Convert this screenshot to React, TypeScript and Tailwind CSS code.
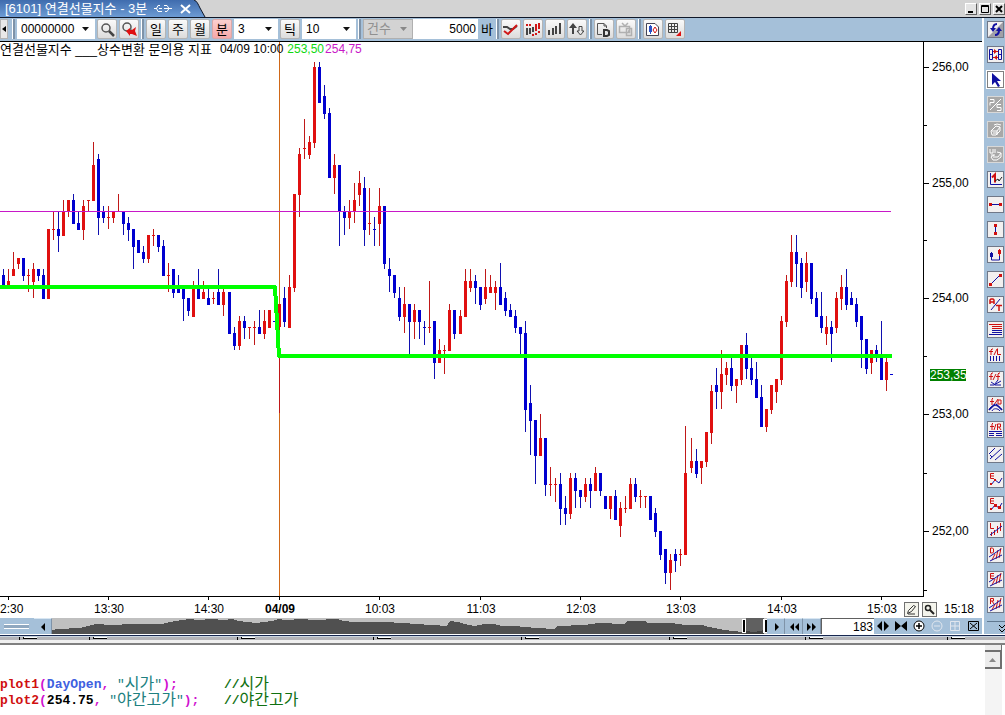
import React from 'react';

type Candle = [x: number, high: number, top: number, bottom: number, low: number, up: 0 | 1];

// 3-minute bars, in chart units
const candles: Candle[] = [
  [3, 269, 275, 285, 285, 0], [8, 269, 281, 285, 285, 1], [13, 252, 269, 276, 276, 1], [18, 258, 258, 264, 269, 1],
  [23, 258, 258, 276, 281, 0], [28, 269, 275, 275, 292, 1], [33, 263, 269, 282, 298, 1], [38, 269, 269, 276, 281, 0],
  [43, 269, 275, 299, 299, 0], [48, 229, 229, 299, 299, 1], [53, 212, 229, 229, 240, 1], [58, 212, 229, 236, 252, 0],
  [63, 200, 212, 236, 236, 1], [68, 200, 200, 212, 217, 1], [73, 194, 200, 224, 224, 0], [78, 212, 223, 230, 230, 0],
  [83, 200, 206, 230, 240, 1], [88, 200, 200, 200, 212, 1], [93, 142, 165, 201, 201, 1], [98, 154, 159, 218, 235, 0],
  [103, 206, 212, 218, 223, 0], [108, 206, 217, 217, 229, 1], [113, 212, 212, 218, 223, 1], [118, 194, 211, 211, 212, 1],
  [123, 212, 212, 224, 235, 0], [128, 217, 223, 230, 241, 0], [133, 229, 229, 247, 269, 0], [138, 240, 240, 253, 253, 0],
  [143, 246, 252, 259, 263, 0], [148, 235, 235, 259, 263, 1], [153, 229, 235, 235, 246, 1], [158, 235, 235, 247, 252, 0],
  [163, 240, 246, 276, 276, 0], [168, 263, 275, 275, 292, 1], [173, 269, 269, 293, 298, 0], [178, 275, 285, 293, 293, 0],
  [183, 289, 289, 299, 321, 0], [188, 298, 298, 311, 316, 0], [193, 281, 287, 317, 317, 1], [198, 269, 287, 299, 299, 0],
  [203, 281, 292, 299, 299, 1], [208, 288, 298, 305, 305, 0], [213, 292, 298, 298, 304, 1], [218, 269, 292, 305, 305, 0],
  [223, 288, 292, 305, 316, 1], [229, 292, 292, 334, 334, 0], [234, 327, 333, 346, 350, 0], [239, 316, 321, 346, 350, 1],
  [244, 316, 321, 328, 339, 0], [249, 327, 327, 327, 339, 1], [254, 321, 327, 327, 345, 1], [259, 310, 327, 334, 334, 0],
  [264, 310, 321, 334, 339, 1], [269, 310, 310, 328, 328, 1], [274, 321, 321, 321, 321, 0], [279, 304, 304, 327, 413, 1],
  [284, 287, 298, 322, 327, 0], [289, 275, 287, 328, 328, 1], [294, 194, 194, 288, 292, 1], [299, 148, 154, 195, 217, 1],
  [304, 119, 148, 148, 159, 1], [309, 136, 142, 155, 159, 1], [314, 62, 67, 143, 148, 1], [319, 62, 67, 103, 103, 0],
  [324, 85, 96, 114, 119, 0], [329, 108, 113, 178, 178, 0], [334, 154, 165, 178, 194, 1], [339, 165, 165, 212, 246, 0],
  [344, 206, 211, 218, 235, 0], [349, 200, 211, 218, 229, 1], [354, 183, 200, 212, 223, 1], [359, 171, 183, 195, 206, 1],
  [364, 177, 188, 230, 246, 0], [369, 188, 223, 223, 235, 1], [374, 217, 229, 229, 246, 0], [379, 188, 206, 224, 246, 1],
  [384, 206, 206, 264, 269, 0], [389, 258, 269, 276, 292, 0], [394, 275, 275, 293, 298, 0], [399, 287, 298, 317, 321, 0],
  [404, 287, 304, 317, 333, 1], [409, 304, 304, 322, 354, 0], [414, 304, 310, 322, 339, 1], [419, 310, 310, 322, 339, 0],
  [424, 321, 327, 327, 345, 0], [429, 281, 327, 327, 333, 1], [434, 321, 321, 363, 379, 0], [439, 339, 350, 363, 363, 1],
  [444, 345, 350, 350, 374, 1], [449, 304, 310, 351, 351, 1], [454, 310, 310, 334, 339, 0], [460, 310, 316, 334, 334, 1],
  [465, 269, 281, 317, 317, 1], [470, 269, 281, 288, 292, 1], [475, 275, 281, 288, 304, 0], [480, 287, 287, 305, 310, 0],
  [485, 269, 287, 299, 304, 1], [490, 275, 287, 293, 293, 1], [495, 281, 287, 293, 310, 1], [500, 263, 287, 305, 305, 0],
  [505, 292, 298, 311, 316, 0], [510, 304, 310, 317, 317, 0], [515, 310, 316, 328, 333, 0], [520, 327, 327, 334, 354, 0],
  [525, 321, 333, 410, 432, 0], [530, 385, 403, 421, 455, 0], [535, 420, 420, 456, 484, 0], [540, 414, 438, 456, 456, 1],
  [545, 438, 438, 485, 496, 0], [550, 467, 484, 484, 496, 1], [555, 478, 484, 484, 502, 1], [560, 473, 484, 509, 525, 0],
  [565, 496, 508, 514, 525, 0], [570, 473, 478, 514, 519, 1], [575, 473, 478, 491, 508, 0], [580, 490, 490, 497, 508, 0],
  [585, 478, 484, 497, 502, 1], [590, 478, 484, 491, 508, 0], [595, 467, 473, 491, 491, 1], [600, 473, 473, 491, 496, 0],
  [605, 496, 496, 509, 509, 0], [610, 496, 496, 509, 519, 1], [615, 490, 496, 520, 520, 0], [620, 502, 508, 526, 537, 1],
  [625, 496, 508, 508, 513, 1], [630, 478, 484, 509, 509, 1], [635, 478, 484, 497, 502, 0], [640, 490, 496, 496, 508, 1],
  [645, 496, 496, 496, 508, 1], [650, 496, 496, 520, 520, 0], [655, 508, 513, 532, 537, 0], [660, 531, 531, 555, 560, 0],
  [665, 549, 549, 573, 584, 0], [670, 554, 560, 573, 590, 1], [675, 549, 554, 561, 572, 0], [680, 549, 554, 554, 566, 1],
  [685, 426, 473, 555, 555, 1], [691, 438, 461, 468, 473, 1], [696, 449, 461, 474, 478, 0], [701, 461, 461, 468, 484, 1],
  [706, 432, 432, 462, 467, 1], [711, 385, 391, 433, 444, 1], [716, 368, 385, 392, 409, 0], [721, 350, 374, 392, 409, 1],
  [726, 362, 368, 375, 385, 1], [731, 357, 368, 386, 391, 0], [736, 379, 379, 386, 403, 1], [741, 345, 345, 380, 385, 1],
  [746, 333, 345, 369, 379, 0], [751, 357, 368, 380, 385, 0], [756, 362, 379, 398, 398, 0], [761, 385, 397, 427, 427, 0],
  [766, 409, 409, 427, 432, 1], [771, 385, 385, 410, 414, 1], [776, 379, 379, 392, 403, 1], [781, 316, 321, 380, 385, 1],
  [786, 275, 281, 322, 327, 1], [791, 235, 252, 282, 287, 1], [796, 235, 252, 264, 287, 0], [801, 258, 263, 288, 298, 0],
  [806, 252, 263, 282, 292, 1], [811, 263, 263, 299, 304, 0], [816, 292, 298, 317, 317, 0], [821, 292, 316, 328, 333, 0],
  [826, 316, 327, 334, 345, 1], [831, 321, 327, 334, 362, 0], [836, 292, 298, 328, 333, 1], [841, 275, 287, 299, 310, 1],
  [846, 269, 287, 305, 310, 0], [851, 292, 298, 305, 305, 0], [856, 298, 304, 322, 327, 0], [861, 316, 316, 340, 368, 0],
  [866, 339, 339, 369, 374, 0], [871, 350, 350, 363, 374, 1], [876, 345, 350, 356, 362, 0], [881, 321, 357, 380, 380, 0],
  [886, 357, 362, 380, 391, 1], [891, 374, 374, 374, 374, 0],
];

const priceTicks = [
  { y: 67, label: '256,00' },
  { y: 183, label: '255,00' },
  { y: 298, label: '254,00' },
  { y: 414, label: '253,00' },
  { y: 531, label: '252,00' },
];
const minorTicks = [125, 240, 356, 473, 590];

const timeTicks = [
  { x: 108, label: '13:30' },
  { x: 208, label: '14:30' },
  { x: 279, label: '04/09', bold: true },
  { x: 379, label: '10:03' },
  { x: 480, label: '11:03' },
  { x: 580, label: '12:03' },
  { x: 680, label: '13:03' },
  { x: 781, label: '14:03' },
  { x: 881, label: '15:03' },
];

const R = '#d01010';
const B = '#1010a0';

function Line({ d, c = B, w = 1 }: { d: string; c?: string; w?: number }) {
  return <path d={d} stroke={c} strokeWidth={w} fill="none" />;
}

const tools: { name: string; kind?: 'off' | 'on'; icon: React.ReactNode }[] = [
  {
    name: '새로고침',
    icon: (
      <>
        <path d="M15 0v15H0z" fill="#a0a0a8" />
        <Line d="M9 2C6 2 5 4 5 7" w={2} />
        <path d="M2 6h6L5 10z" fill={B} />
        <Line d="M7 13c3 0 4-2 4-5" w={2} />
        <path d="M8 9h6l-3-4z" fill={B} />
      </>
    ),
  },
  {
    name: '연결',
    icon: (
      <>
        <Line d="M1.500 2.500h3v10h-3zM10.500 2.500h3v10h-3zM1 7.500h4M10 7.500h4" />
        <Line d="M5 4.500h5M5 10.500h5" c={R} />
        <path d="M6 2v5l3-2.500zM9 8v5l-3-2.500z" fill={R} />
      </>
    ),
  },
  { name: '선택', kind: 'on', icon: <path d="M4 1v12l3-3 3 5 2-1-3-5h4z" fill={B} /> },
  { name: '비율', kind: 'off', icon: <Line d="M2 13L13 2M2 2.500h4v3H2v3M13 7.500H9v3h4v3H9" c="#fff" /> },
  { name: '지우개', kind: 'off', icon: <Line d="M3 9l5-5 4 1v4l-4 4H4zM4 9h5l3-4M6 3l3-1 4 1M9 9v4M5 11h5" c="#fff" /> },
  { name: '전체 지우기', kind: 'off', icon: <Line d="M2 2v4h3V2M7 2v4M9 5l4 1v4l-4 3H5l-2-3 3-2M5 10h5l3-4M3 8h4" c="#fff" /> },
  {
    name: '지그재그',
    icon: (
      <>
        <Line d="M2.500 1v11.500H14" />
        <Line d="M4 5.500l3-3v8" c={R} w={2} />
        <Line d="M7 9l3-2 1 2 3-4" c="#202020" />
      </>
    ),
  },
  {
    name: '수평선',
    icon: (
      <>
        <Line d="M3 7.500h9" />
        <path d="M1 6h3v3H1zM11 6h3v3h-3z" fill={R} />
      </>
    ),
  },
  {
    name: '수직선',
    icon: (
      <>
        <Line d="M7.500 3v9" />
        <path d="M6 2h3v3H6zM6 10h3v3H6z" fill={R} />
      </>
    ),
  },
  {
    name: '크로스',
    icon: (
      <>
        <Line d="M3.500 5v8h8V9" />
        <path d="M2 6h3v4H2z" fill={B} />
        <Line d="M11.500 2v7" c={R} />
        <path d="M10 3h3v4h-3z" fill={R} />
      </>
    ),
  },
  {
    name: '추세선',
    icon: (
      <>
        <Line d="M3 12L12 3" />
        <path d="M1 11h3v3H1zM11 2h3v3h-3z" fill={R} />
      </>
    ),
  },
  {
    name: '문자',
    icon: (
      <>
        <Line d="M3 13L12 2" />
        <Line d="M2 7V3l1-1h2l1 1v4M2 5h4M8 8.500h6M11 8v6" c={R} w={1.5} />
      </>
    ),
  },
  {
    name: '피보나치',
    icon: (
      <>
        <Line d="M1 2.500h13M4 4.500h10M4 6.500h10" c={R} />
        <Line d="M4 8.500h10M4 10.500h10M1 12.500h13" />
      </>
    ),
  },
  {
    name: '피보나치 시간대',
    icon: (
      <>
        <Line d="M5 2H4L3 3v5M1 4.500h4M9.500 1.500v6H13M6 8l3-6" c={R} />
        <Line d="M2.500 9v5M5.500 9v5M8.500 9v5M11.500 9v5" />
      </>
    ),
  },
  {
    name: '피보나치 팬',
    icon: (
      <>
        <Line d="M5 1H4L3 2v6M1 4.500h4M12 1h-1l-1 1v6M8 4.500h4M5 8l3-6" c={R} />
        <Line d="M2 13h4l4-5M6 13l7-4M3 10l3 2M7 13h6" />
      </>
    ),
  },
  {
    name: '피보나치 아크',
    icon: (
      <>
        <Line d="M5 1L4 2v6M2 4.500h4M13 3h-3v4h3V3M6 8l4-6" c={R} />
        <Line d="M1 13c2-6 10-6 13 0M4 14c1-3 6-3 8 0" />
        <Line d="M7 7l-6 6M8 7l6 6" w={1.5} />
      </>
    ),
  },
  {
    name: '피보나치 되돌림',
    icon: (
      <>
        <Line d="M5 1L4 2v6M2 4.500h4M9.500 8V2h3v3h-3M11 5l2 3M6 8l2-6" c={R} />
        <Line d="M1 9.500h13M1 11.500h5M8 11.500h6M1 13.500h5M8 13.500h6" />
      </>
    ),
  },
  { name: '평행선', icon: <Line d="M1 7l6-6M2 12L13 2M7 13l7-6M2 8l2 2" /> },
  {
    name: '엘리어트',
    icon: (
      <>
        <Line d="M6 1.500H2.500v5H6M3 4h3" c={R} />
        <Line d="M3 13l4-5 4 3 3-5" />
        <path d="M2 11h2v2H2zM6 7h2v2H6z" fill={R} />
      </>
    ),
  },
  {
    name: '엘리어트 2',
    icon: (
      <>
        <Line d="M6 1.500H2.500v5H6M3 4h3" c={R} />
        <Line d="M3 13l4-5 4 3 3-5" />
        <path d="M2 11h2v2H2zM6 7h3v3H6zM10 9h3v3h-3z" fill={R} />
      </>
    ),
  },
  {
    name: '선형회귀',
    icon: (
      <>
        <Line d="M2.500 1v5.500H6" c={R} />
        <Line d="M3.500 14v-4M6.500 13V8M9.500 11V4M12.500 9V1" c={R} />
        <Line d="M2 13l12-9" />
      </>
    ),
  },
  {
    name: '회귀 채널',
    icon: (
      <>
        <Line d="M2.500 1v5h2l1-1V2l-1-1zM4 13l3-6M8 12l2-9M11 11l2-10" c={R} />
        <Line d="M1 10l12-8M2 14l12-6" />
      </>
    ),
  },
  {
    name: '표준편차 채널',
    icon: (
      <>
        <Line d="M6 1.500H2.500v5H6M3 4h3M4 13l3-6M8 12l2-9M11 11l2-10" c={R} />
        <Line d="M1 10l12-8M2 14l12-6" />
      </>
    ),
  },
  {
    name: '래프 채널',
    icon: (
      <>
        <Line d="M2.500 7V1.500h3V4h-3M4 4l2 3M4 13l3-6M8 12l2-9M11 11l2-10" c={R} />
        <Line d="M1 11l12-8M2 14l12-6" />
      </>
    ),
  },
];

function Sep() {
  return <span className="h-5 w-[3px] shrink-0 border-l border-white bg-[#7f93a8]" />;
}

function ToolButton({ label, active, children }: { label: string; active?: boolean; children: React.ReactNode }) {
  return (
    <button
      aria-label={label}
      className={
        'flex h-5 w-5 shrink-0 items-center justify-center rounded-[2px] border text-[13px] leading-none ' +
        (active
          ? 'border-[#d8a8a8] bg-linear-to-b from-[#fbd0d0] to-[#f4a8a8]'
          : 'border-[#b4b4b4] bg-linear-to-b from-[#fafafa] to-[#dcdcdc]')
      }
    >
      {children}
    </button>
  );
}

function Combo({ label, value, width, disabled }: { label: string; value: string; width: string; disabled?: boolean }) {
  return (
    <div className={'relative h-5 shrink-0 ' + width}>
      <select
        aria-label={label}
        disabled={disabled}
        className={
          'block h-5 w-full appearance-none border px-[3px] leading-4 ' +
          (disabled
            ? 'border-[#b0b0b0] bg-[#d3d3d3] text-[13px] text-[#909090] opacity-100'
            : 'border-white bg-white text-xs leading-4 text-black')
        }
      >
        <option>{value}</option>
      </select>
      <svg viewBox="0 0 7 4" className="pointer-events-none absolute right-[6px] top-2 h-1 w-[7px]">
        <path d="M0 0h7L3.500 4z" fill={disabled ? '#888' : '#111'} />
      </svg>
    </div>
  );
}

function TitleBar() {
  return (
    <header className="flex h-[18px] items-stretch justify-between border-b border-[#101828] bg-[#d3d3d3]">
      <div className="flex">
        <div className="flex items-center bg-linear-to-b from-[#3f6cae] to-[#6d9bd3] pl-[5px] text-white">
          <h1 className="whitespace-pre text-[13px] leading-none">[6101] 연결선물지수 - 3분</h1>
          <svg viewBox="0 0 18 9" className="ml-[7px] h-[9px] w-[18px]" fill="none" stroke="#fff" strokeWidth="1">
            <path d="M0 4.500h3M6 1.500H4L2.500 4.500 4 7.500h4M5 4.500h3M10 1.500h3l2 3-2 3h-2M10 4.500h8" />
          </svg>
          <button aria-label="탭 닫기" className="ml-2 flex w-3 items-center">
            <svg viewBox="0 0 11 10" className="h-[10px] w-[11px]" stroke="#fff" strokeWidth="2">
              <path d="M1 1l9 8M10 1L1 9" />
            </svg>
          </button>
        </div>
        <svg viewBox="0 0 14 17" className="h-[17px] w-[14px]">
          <defs>
            <linearGradient id="tab" x1="0" y1="0" x2="0" y2="1">
              <stop offset="0" stopColor="#3f6cae" />
              <stop offset="1" stopColor="#6d9bd3" />
            </linearGradient>
          </defs>
          <path d="M0 0h2c3 1 4 4 6 8l5 9H0z" fill="url(#tab)" />
          <path d="M2 0c3 1 4 4 6 8l5 9" fill="none" stroke="#101828" />
        </svg>
      </div>
      <div className="flex items-center gap-[2px]">
        {[
          ['최소화', 'M2 8h5', 2],
          ['최대화', 'M1.5 1.5h7v7h-7zM1.5 2.5h7', 1],
          ['닫기', 'M2 2l6 6M8 2L2 8', 2],
        ].map(([label, d, w]) => (
          <button
            key={label}
            aria-label={label as string}
            className="flex h-3 w-3 items-center justify-center border border-t-white border-l-white border-r-[#606060] border-b-[#606060] bg-[#e4e4e4]"
          >
            <svg viewBox="0 0 10 10" className="h-[10px] w-[10px]" fill="none" stroke="#000" strokeWidth={w as number}>
              <path d={d as string} />
            </svg>
          </button>
        ))}
      </div>
    </header>
  );
}

function Toolbar() {
  return (
    <div className="flex h-6 items-center overflow-hidden border-b border-black bg-[#a5c0d9] pb-px">
      <button aria-label="이전" className="flex h-5 w-2 items-center justify-center border border-[#b4b4b4] bg-[#e8e8e8]">
        <svg viewBox="0 0 4 6" className="h-[6px] w-1">
          <path d="M4 0v6L0 3z" />
        </svg>
      </button>
      <div className="ml-1 flex items-center gap-[2px]">
        <Sep />
        <Combo label="종목코드" value="00000000" width="w-[78px]" />
        <ToolButton label="종목 검색">
          <svg viewBox="0 0 15 15" className="h-[15px] w-[15px]" fill="none">
            <circle cx="6" cy="6" r="4" stroke="#555" strokeWidth="1.500" />
            <path d="M9 9l5 5" stroke="#444" strokeWidth="2.500" />
          </svg>
        </ToolButton>
        <ToolButton label="검색 취소">
          <svg viewBox="0 0 15 15" className="h-[15px] w-[15px]" fill="none">
            <circle cx="5" cy="5" r="4" stroke="#555" strokeWidth="1.500" />
            <path d="M9 8l4 4" stroke="#444" strokeWidth="2" />
            <path d="M4 9l4-3v2h2l4-3-1 4 2 5-5-2H8v2z" fill="#e01010" />
          </svg>
        </ToolButton>
        <Sep />
        <ToolButton label="일">일</ToolButton>
        <ToolButton label="주">주</ToolButton>
        <ToolButton label="월">월</ToolButton>
        <ToolButton label="분" active>분</ToolButton>
        <Combo label="분 단위" value="3" width="w-[44px]" />
        <ToolButton label="틱">틱</ToolButton>
        <Combo label="틱 단위" value="10" width="w-[54px]" />
        <Sep />
        <Combo label="조회 기준" value="건수" width="w-[50px]" disabled />
      </div>
      <label className="flex shrink-0 items-center gap-[3px] text-[13px] leading-none">
        <input defaultValue="5000" className="h-5 w-[65px] border border-white bg-white px-px text-right text-xs" />
        바
      </label>
      <div className="ml-[3px] flex items-center gap-[2px]">
        <Sep />
        <ToolButton label="선형 차트">
          <svg viewBox="0 0 15 15" className="h-[15px] w-[15px]" fill="none">
            <path d="M0 5h4l3 2h3l4-3" stroke="#444" strokeWidth="2" />
            <path d="M1 9l4 3 9-9" stroke="#d01818" strokeWidth="2" />
          </svg>
        </ToolButton>
        <ToolButton label="캔들 설정">
          <svg viewBox="0 0 15 15" className="h-[15px] w-[15px]" fill="none" strokeWidth="2">
            <path d="M2 6v7M5 6v6M8 5v5" stroke="#444" />
            <path d="M2 2v2M5 2v2M8 12v2M11 2v7M11 11v2M14 1v6M14 9v2" stroke="#d01818" />
          </svg>
        </ToolButton>
        <ToolButton label="거래량">
          <svg viewBox="0 0 15 15" className="h-[15px] w-[15px]" fill="none" stroke="#444" strokeWidth="2">
            <path d="M2 8v5M6 6v7M9 4v8M13 1v11" />
          </svg>
        </ToolButton>
        <ToolButton label="정렬">
          <svg viewBox="0 0 15 15" className="h-[15px] w-[15px]" fill="none" stroke="#444">
            <path d="M0 6l4-5 4 5H5v6H3V6z" fill="#444" stroke="none" />
            <path d="M10 4.500h3V9h2l-3.500 4L8 9h2z" />
          </svg>
        </ToolButton>
        <Sep />
        <ToolButton label="문서">
          <svg viewBox="0 0 15 15" className="h-[15px] w-[15px]" fill="none" stroke="#555">
            <path d="M6 12.500H1.500v-11H8L10.500 4v2M8 1.500V4h2.500" />
            <path d="M8 8h3l2 1v4l-2 1H8z" stroke="#333" strokeWidth="2" />
          </svg>
        </ToolButton>
        <ToolButton label="방송">
          <svg viewBox="0 0 15 15" className="h-[15px] w-[15px]" fill="none" stroke="#b0b0b0">
            <path d="M1.500 4.500h10v6h-10zM4 1l3 3 3-3M8.500 6.500h5v7h-5zM10 9h2" strokeWidth="1.500" />
          </svg>
        </ToolButton>
        <Sep />
        <ToolButton label="차트 저장">
          <svg viewBox="0 0 15 15" className="h-[15px] w-[15px]" fill="none">
            <path d="M1.500 1.500H10L13.500 5v8.500h-12z" stroke="#445" fill="#fff" />
            <path d="M4 4h3v6H4zM5 3h1v9H5z" fill="#2850c8" />
            <path d="M10 5l2 3-2 3-2-3z" stroke="#d01818" />
          </svg>
        </ToolButton>
        <ToolButton label="격자">
          <svg viewBox="0 0 15 15" className="h-[15px] w-[15px]" fill="none">
            <path d="M1.500 1.500h9v9h-9zM4.500 1.500v9M7.500 1.500v9M1.500 4.500h9M1.500 7.500h9" stroke="#444" />
            <path d="M14 9v5H9z" fill="#e01010" />
          </svg>
        </ToolButton>
      </div>
    </div>
  );
}

function PriceChart() {
  return (
    <div className="relative bg-white">
      <svg viewBox="0 42 982 576" className="block h-auto w-full" shapeRendering="crispEdges">
        <rect x="279" y="42" width="1" height="554" fill="#d06818" />
        {candles.map(([x, high, top, bottom, low, up]) => (
          <g key={x} fill={up ? '#e01010' : '#0000d0'}>
            <rect x={x} y={high} width="1" height={Math.max(1, low - high)} fill={up ? '#c01818' : '#1010b0'} />
            <rect x={x - 1} y={top} width="3" height={Math.max(1, bottom - top)} />
          </g>
        ))}
        <rect x="0" y="211" width="891" height="1" fill="#c818c8" />
        <path d="M0 287h275l4 69h613" fill="none" stroke="#00ff00" strokeWidth="4" strokeLinejoin="round" />

        <path d="M0 596.500h923.500V42" fill="none" stroke="#000" />
        {priceTicks.map((t) => (
          <g key={t.y}>
            <rect x="924" y={t.y} width="5" height="1" />
            <text x="932" y={t.y + 4} fontSize="12">{t.label}</text>
          </g>
        ))}
        {minorTicks.map((y) => (
          <rect key={y} x="924" y={y} width="3" height="1" />
        ))}
        <rect x="8" y="597" width="1" height="3" />
        <text x="0" y="613" fontSize="12">2:30</text>
        {timeTicks.map((t) => (
          <g key={t.x}>
            <rect x={t.x} y="597" width="1" height="3" />
            <text x={t.x + 1} y="613" fontSize="12" textAnchor="middle" fontWeight={t.bold ? 700 : 400}>
              {t.label}
            </text>
          </g>
        ))}
        <rect x="930" y="369" width="36" height="12" fill="#008000" />
        <text x="930" y="379" fontSize="12" fill="#fff">253,35</text>
      </svg>
      <p className="absolute left-0 top-0 flex items-center whitespace-pre text-xs leading-[15px]">
        <span className="text-[13px] leading-[15px]">연결선물지수 ___상수변환 문의용 지표</span>
        <span className="ml-2">04/09 10:00</span>
        <span className="ml-1 text-[#10d810]">253,50</span>
        <span className="ml-px text-[#c818c8]">254,75</span>
      </p>
      <div className="absolute right-2 bottom-0 flex h-[18px] items-center gap-[3px] text-xs leading-none">
        <button aria-label="그리기" className="flex h-[15px] w-[15px] items-center justify-center border border-[#707070] bg-[#f4f4ec]">
          <svg viewBox="0 0 11 11" className="h-[11px] w-[11px]" fill="none" stroke="#333">
            <path d="M1.500 9.500l1-3 5-5 2 1-4 5zM2 10h7" />
          </svg>
        </button>
        <button aria-label="확대" className="flex h-[15px] w-[15px] items-center justify-center border border-[#707070] bg-[#f4f4ec]">
          <svg viewBox="0 0 11 11" className="h-[11px] w-[11px]" fill="none" stroke="#222">
            <circle cx="4" cy="4" r="2.500" strokeWidth="1.500" />
            <path d="M6 6l4 4" strokeWidth="2" />
          </svg>
        </button>
        <span className="ml-1">15:18</span>
      </div>
    </div>
  );
}

function ScrollButton({ label, d }: { label: string; d: string }) {
  return (
    <button aria-label={label} className="flex h-4 w-[18px] shrink-0 items-center justify-center border-t border-r border-t-[#d8e6f2] border-r-[#7f93a8]">
      <svg viewBox="0 0 10 8" className="h-2 w-[10px]">
        <path d={d} />
      </svg>
    </button>
  );
}

function ZoomButton({ label, children }: { label: string; children: React.ReactNode }) {
  return (
    <button aria-label={label} className="flex h-4 w-[18px] shrink-0 items-center justify-center">
      <svg viewBox="0 0 14 12" className="h-3 w-[14px]" fill="none" stroke="#000">
        {children}
      </svg>
    </button>
  );
}

function ScrollRow() {
  return (
    <div className="flex h-4 items-stretch bg-[#a5c0d9]">
      <div className="flex w-[34px] shrink-0 items-center pl-1">
        <span className="h-[5px] w-[25px] border-y border-y-white bg-[#90a8c0]" />
      </div>
      <ScrollButton label="왼쪽으로" d="M7 0v8L3 4z" />
      <svg viewBox="0 0 715 16" preserveAspectRatio="none" shapeRendering="crispEdges" className="h-4 min-w-0 flex-1 bg-[#c0c0c0]">
        <path
          d="M0 16V12L6 11L28 10L36 8L44 6L60 7L80 6L92 6L110 6L118 4L124 3L130 2L138 1L145 2L160 1L172 2L180 1L186 3L196 4L204 5L212 4L220 3L226 1L234 2L250 1L262 2L285 1L291 3L302 4L330 4L353 5L363 6L380 7L395 8L398 3L406 4L412 6L422 8L432 6L442 6L450 8L462 8L485 10L503 11L505 8L532 7L547 5L573 6L575 3L593 3L596 5L620 5L626 6L633 7L650 7L657 9L673 12L690 14L702 13L712 14V16z"
          fill="#505050"
        />
        <rect x="694" y="0" width="18" height="16" fill="#606060" />
        <path d="M694 16v-3l8 1 10-2v4z" fill="#404040" />
        <rect x="690" y="1" width="4" height="14" fill="#fff" />
        <rect x="691" y="2" width="2" height="12" />
        <rect x="711" y="1" width="4" height="14" fill="#fff" />
        <rect x="713" y="2" width="2" height="12" />
      </svg>
      <ScrollButton label="재생" d="M4 0v8l4-4z" />
      <ScrollButton label="빠르게 뒤로" d="M5 0v8L1 4zM10 0v8L6 4z" />
      <ScrollButton label="빠르게 앞으로" d="M0 0v8l4-4zM5 0v8l4-4z" />
      <input
        aria-label="봉 개수"
        defaultValue="183"
        className="h-4 w-[53px] shrink-0 border-t border-l border-[#606060] bg-white pr-px text-right text-xs leading-none"
      />
      <div className="flex w-[108px] shrink-0 items-center">
        <ZoomButton label="간격 넓게"><path d="M6 1v10L1 6zM8 1v10l5-5z" fill="#000" stroke="none" /></ZoomButton>
        <ZoomButton label="간격 좁게"><path d="M1 1v10l6-5zM13 1v10L7 6z" fill="#000" stroke="none" /></ZoomButton>
        <ZoomButton label="확대"><circle cx="7" cy="6" r="5" fill="#fff" /><path d="M4 6h6M7 3v6" strokeWidth="1.500" /></ZoomButton>
        <ZoomButton label="축소"><g stroke="#e0e6ee"><circle cx="7" cy="6" r="5" /><path d="M4 6h6" /></g></ZoomButton>
        <ZoomButton label="격자"><path d="M2.500 1.500h9v9h-9zM2 6h10M7 1v10" stroke="#e0e6ee" /></ZoomButton>
        <ZoomButton label="전체 보기"><path d="M2.500 1.500h10v9h-10zM4 3l7 6M11 3L4 9" /></ZoomButton>
      </div>
    </div>
  );
}

function SideTools() {
  return (
    <aside className="flex w-[23px] shrink-0 flex-col border-l-2 border-white bg-[#a5c0d9] pt-[3px] pl-[3px]">
      <div className="flex flex-col gap-2">
        {tools.map((t) => (
          <button
            key={t.name}
            aria-label={t.name}
            className={
              'flex h-[17px] w-[17px] items-center justify-center border ' +
              (t.kind === 'off'
                ? 'border-[#d8d8d8] bg-[#a8a8a8]'
                : t.kind === 'on'
                  ? 'border-[#808080] bg-white outline outline-white'
                  : 'border-[#707888] bg-[#f2f0f0]')
            }
          >
            <svg viewBox="0 0 15 15" className="h-[15px] w-[15px]">{t.icon}</svg>
          </button>
        ))}
      </div>
      <button aria-label="더 보기" className="mt-2 flex w-[18px] justify-end border-t border-[#607890] pt-[3px]">
        <svg viewBox="0 0 6 8" className="h-2 w-[6px]" fill="none" stroke="#000">
          <path d="M0 0l3 3 3-3M0 4l3 3 3-3" />
        </svg>
      </button>
    </aside>
  );
}

const lowerTabs = ['w-[70px]', 'w-[148px]', 'w-[136px]', 'w-[148px]', 'w-[148px]', 'w-[136px]', 'w-[142px]', 'w-[58px]'];

function Divider() {
  return (
    <div>
      <div className="h-[3px] border-t border-b border-t-white border-b-[#c8d4e0] bg-[#182850]" />
      <div className="flex h-[3px] overflow-hidden bg-[#b4b4b8] pl-[19px]">
        {lowerTabs.map((w, i) => (
          <div key={i} className={'shrink-0 border-l border-black pl-[3px] ' + w}>
            <div className="h-[2px] w-[14px] border-b border-l border-black bg-white" />
          </div>
        ))}
      </div>
      <div className="h-[5px] border-b-2 border-[#808080] bg-[#f0f0f0]" />
    </div>
  );
}

function CodeLine({ fn, arg, title }: { fn: string; arg: React.ReactNode; title: string }) {
  return (
    <code className="flex h-4 items-center font-[inherit]">
      <span className="flex w-[224px] items-center">
        <span className="text-[#d01010]">{fn}</span>
        <span className="text-[#d010d0]">(</span>
        {arg}
        <span className="text-[#d010d0]">, </span>
        <span className="font-normal text-[#208080]">"</span>
        <span className="text-base leading-4 font-normal text-[#208080]">{title}</span>
        <span className="font-normal text-[#208080]">"</span>
        <span className="text-[#d010d0]">);</span>
      </span>
      <span className="text-[#107010]">//</span>
      <span className="text-base leading-4 font-normal text-[#107010]">{title}</span>
    </code>
  );
}

function Editor() {
  return (
    <section className="flex flex-1 bg-white">
      <pre className="flex-1 pt-8 font-['Liberation_Mono','Noto_Sans_CJK_KR',monospace] text-[13px] leading-4 font-bold">
        <CodeLine fn="plot1" arg={<span className="text-[#4060e0]">DayOpen</span>} title="시가" />
        <CodeLine fn="plot2" arg={<span>254.75</span>} title="야간고가" />
      </pre>
      <div className="mr-[3px] flex w-[17px] flex-col bg-[#f4f4f4]">
        <span className="h-[7px] border-r border-b-2 border-[#707070] bg-[#ececec]" />
        <button aria-label="위로" className="flex h-[17px] items-center justify-center border-r-2 border-b-2 border-[#707070] bg-[#ececec]">
          <svg viewBox="0 0 7 4" className="h-1 w-[7px]">
            <path d="M0 4h7L3.500 0z" fill="#888" />
          </svg>
        </button>
      </div>
    </section>
  );
}

export default function App() {
  return (
    <div className="flex min-h-screen flex-col bg-white font-['Liberation_Sans','Noto_Sans_CJK_KR',sans-serif] text-black">
      <TitleBar />
      <main className="flex">
        <div className="min-w-0 flex-1">
          <Toolbar />
          <PriceChart />
          <ScrollRow />
        </div>
        <SideTools />
      </main>
      <Divider />
      <Editor />
    </div>
  );
}
